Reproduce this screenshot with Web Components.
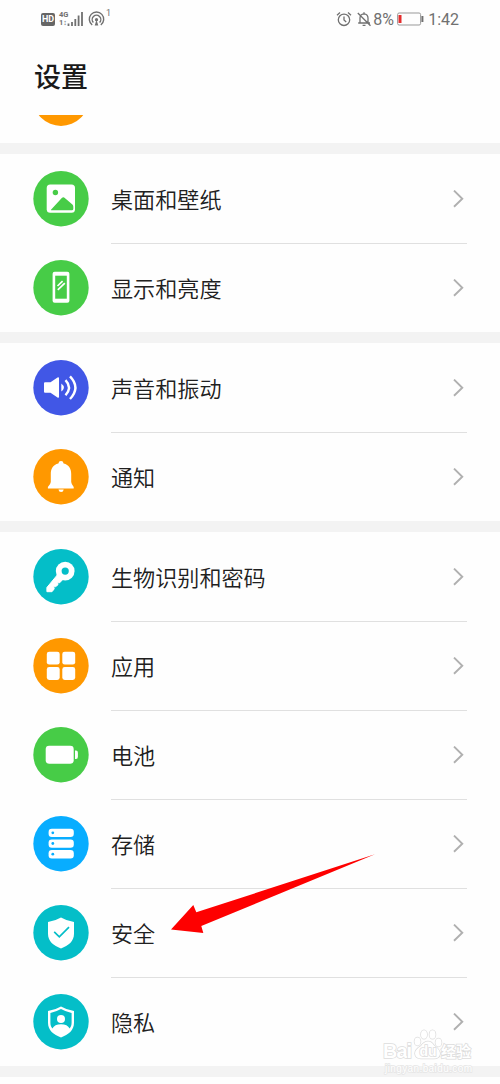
<!DOCTYPE html>
<html lang="zh-CN">
<head>
<meta charset="utf-8">
<title>设置</title>
<style>
  body {
    margin: 0;
    background: #fefefe;
    color: #202020;
    font-family: Roboto, "Noto Sans CJK SC", sans-serif;
  }
</style>
</head>
<body>
<settings-screen>
  <status-bar></status-bar>
  <settings-group>
    <settings-item icon="picture" color="#47cc47">桌面和壁纸</settings-item>
    <settings-item icon="display" color="#47cc47">显示和亮度</settings-item>
  </settings-group>
  <settings-group>
    <settings-item icon="sound" color="#4157e6">声音和振动</settings-item>
    <settings-item icon="bell" color="#ff9800">通知</settings-item>
  </settings-group>
  <settings-group>
    <settings-item icon="key" color="#04bec8">生物识别和密码</settings-item>
    <settings-item icon="apps" color="#ff9800">应用</settings-item>
    <settings-item icon="battery" color="#47cc47">电池</settings-item>
    <settings-item icon="storage" color="#08adff">存储</settings-item>
    <settings-item icon="security" color="#04bec8">安全</settings-item>
    <settings-item icon="privacy" color="#04bec8">隐私</settings-item>
  </settings-group>
</settings-screen>

<script>
const SHIELD = "M28 12.7Q34 16.2 41 17.3V29C41 36.5 35.5 41 28 43.7C20.5 41 15 36.5 15 29V17.3Q22 16.2 28 12.7Z";

// Glyphs on a 56x56 disc; currentColor is the disc colour
const ICONS = {
  picture: `
    <rect x="13.7" y="13.7" width="28.3" height="28.3" rx="3.5"/>
    <g fill="currentColor">
      <circle cx="22.4" cy="21.8" r="2.7"/>
      <path d="M18.3 39.6Q17.5 39.6 18.2 38.8L28.8 27.3Q30.3 25.8 31.8 27.2L39.4 33.8Q40.3 34.7 40.3 36V38.2Q40.3 39.6 38.8 39.6Z"/>
    </g>`,
  display: `
    <rect x="19.6" y="12" width="16.8" height="31" rx="2"/>
    <rect x="22.2" y="16" width="11.6" height="23" fill="currentColor"/>
    <path d="M24.5 26.3L29.6 21.4M24.8 30.2L31.8 23.4" fill="none" stroke="#fff" stroke-width="1.7"/>`,
  sound: `
    <path d="M12 22.5H17.5L24.5 17.7Q26 17 26 18.5V37Q26 38.5 24.5 37.8L17.5 33H12Q11 33 11 32V23.5Q11 22.5 12 22.5Z"/>
    <path d="M28.3 23.8Q33.4 27.8 28.3 31.9Z"/>
    <g fill="none" stroke="#fff" stroke-width="2.4">
      <path d="M32.5 20.4Q39.5 27.8 32.5 35.5"/>
      <path d="M37 16.7Q47.8 27.8 37 39.3"/>
    </g>`,
  bell: `
    <path d="M28 12.3Q30.3 12.3 30.6 14.7C36 16 38.2 20 38.2 25V33.2Q38.4 35.5 40.7 38.2V39.7H14.9V38.2Q17.6 35.5 17.8 33.2V25C17.8 20 20 16 25.4 14.7Q25.7 12.3 28 12.3Z"/>
    <path d="M25.5 40.8H30.7Q30.4 43.3 28.1 43.3Q25.8 43.3 25.5 40.8Z"/>`,
  key: `
    <path d="M27 23L32 28.5L26.5 34.2L24.8 33.2L25 36L22.6 38L20.7 37.3L21.2 40.2L19 43H13.9V38.8Z" stroke="#fff" stroke-linejoin="round"/>
    <circle cx="32.2" cy="22.4" r="9.4"/>
    <circle cx="32.2" cy="22.4" r="3.6" fill="currentColor"/>`,
  apps: `
    <rect x="13.8" y="14" width="12.9" height="12.9" rx="2.4"/>
    <rect x="29.3" y="14" width="12.9" height="12.9" rx="2.4"/>
    <rect x="13.8" y="29.3" width="12.9" height="12.9" rx="2.4"/>
    <rect x="29.3" y="29.3" width="12.9" height="12.9" rx="2.4"/>`,
  battery: `
    <rect x="12.7" y="19" width="28" height="18" rx="3.4"/>
    <path d="M42 23.8H43Q44.9 23.8 44.9 26V30Q44.9 32.2 43 32.2H42Z"/>`,
  storage: [13, 23.7, 34.4].map((y) => `
    <rect x="15.6" y="${y}" width="25.2" height="8.3" rx="3.2"/>
    <circle cx="19.8" cy="${y + 4.1}" r="1.4" fill="currentColor"/>`).join(""),
  security: `
    <path d="${SHIELD}"/>
    <path d="M21.2 27.2L26.3 32.1L36 22.5" fill="none" stroke="currentColor" stroke-width="1.7"/>`,
  privacy: `
    <path d="${SHIELD}"/>
    <path d="M28 15.4Q33 18.3 38.6 19.2V29C38.6 31.5 37.9 33.2 36.6 34.8Q34.5 30.5 28 30.5Q21.5 30.5 19.4 34.8C18.1 33.2 17.4 31.5 17.4 29V19.2Q23 18.3 28 15.4Z" fill="currentColor"/>
    <circle cx="28" cy="25.2" r="4"/>`
};

class StatusBar extends HTMLElement {
  constructor() {
    super();
    this.attachShadow({ mode: "open" });
  }

  static get styles() {
    return /* css */`
      :host {
        display: flex;
        align-items: center;
        justify-content: space-between;
        box-sizing: border-box;
        height: 38px;
        padding: 0 41px 0 41px;
        color: #707070;
      }

      .side {
        display: flex;
        align-items: center;
      }

      svg {
        display: block;
        fill: none;
        stroke: currentColor;
      }

      .hd {
        width: 14px;
        height: 13px;
        border-radius: 2px;
        background: #666;
        color: #fff;
        font: bold 9px/13px Roboto, sans-serif;
        text-align: center;
      }

      .net {
        margin-left: 4px;
        width: 9px;
        font: bold 7.5px/8px Roboto, sans-serif;
      }

      .bars {
        margin-left: -1px;
      }

      .cast {
        margin-left: 5px;
      }

      .one {
        margin: -12px 0 0 1px;
        font-size: 9px;
      }

      .text {
        font-size: 16px;
        line-height: 20px;
        padding-top: 1px;
      }
    `;
  }

  connectedCallback() {
    this.shadowRoot.innerHTML = /* html */`
    <style>${StatusBar.styles}</style>
    <div class="side">
      <div class="hd">HD</div>
      <div class="net">4G<br>1↕</div>
      <svg class="bars" width="16" height="16" stroke-width="1.8">
        <path d="M1.5 15V12.5M5 15V11M8.3 15V8M11.6 15V4.5M15 15V1"/>
      </svg>
      <svg class="cast" width="17" height="16" stroke-width="1.4">
        <path d="M4.2 14A7.2 7.2 0 1 1 12.8 14M5.4 11.5A4.3 4.3 0 1 1 11.6 11.5"/>
        <circle cx="8.5" cy="8.7" r="1.6" fill="currentColor" stroke="none"/>
        <path d="M8.5 9L6.7 14.5H10.3Z" fill="currentColor" stroke="none"/>
      </svg>
      <span class="one">1</span>
    </div>
    <div class="side">
      <svg width="16" height="16" stroke-width="1.3">
        <circle cx="8" cy="8.8" r="5.7"/>
        <path d="M8 5.5V9L10.2 11M1 4.3L4 1.6M15 4.3L12 1.6"/>
      </svg>
      <svg width="16" height="16" stroke-width="1.3" style="margin-left: 4px">
        <path d="M4 12V7Q4 3.2 8 2.8Q12 3.2 12 7V12M2.2 12H14M6.6 14.3H9.5M8 1.2V3M1.8 2L14.5 14.8"/>
      </svg>
      <span class="text" style="margin-left: 1px; width: 24px">8%</span>
      <svg width="27" height="14">
        <rect x=".6" y="1" width="23" height="12" rx="1.5" stroke="#999"/>
        <path d="M3 3V11" stroke="#e52d2d" stroke-width="3"/>
        <path d="M25.4 4V10" stroke-width="2"/>
      </svg>
      <span class="text" style="margin-left: 4px">1:42</span>
    </div>`;
  }
}

class SettingsScreen extends HTMLElement {
  constructor() {
    super();
    this.attachShadow({ mode: "open" });
  }

  static get styles() {
    return /* css */`
      :host {
        display: flex;
        flex-direction: column;
        position: relative;
        width: 500px;
        height: 1084px;
        overflow: hidden;
      }

      h1 {
        box-sizing: border-box;
        margin: 0;
        height: 77px;
        padding: 3px 0 0 34px;
        color: #1a1a1a;
        font-size: 27px;
        font-weight: 500;
        line-height: 75px;
      }

      .clipped {
        height: 28px;
        padding-left: 33px;
        overflow: hidden;
      }

      .disc {
        width: 56px;
        height: 56px;
        margin-top: -44.7px;
        border-radius: 50%;
        background: #ff9800;
      }

      .end {
        height: 11px;
        background: #f3f3f3;
      }

      .pointer {
        position: absolute;
        left: 165px;
        top: 850px;
      }

      .watermark {
        position: absolute;
        left: 382px;
        top: 1026px;
        font-family: "Liberation Sans", "Noto Sans CJK SC", sans-serif;
      }
    `;
  }

  connectedCallback() {
    this.shadowRoot.innerHTML = /* html */`
    <style>${SettingsScreen.styles}</style>
    <slot name="status"></slot>
    <h1>设置</h1>
    <div class="clipped"><div class="disc"></div></div>
    <slot></slot>
    <div class="end"></div>
    <svg class="pointer" width="215" height="90">
      <path d="M6 79.5L28.3 55L31.3 62.3L210 4.3L36.3 76L38.3 83Z" fill="#fe0000"/>
    </svg>
    <svg class="watermark" width="100" height="52" fill="#fff" stroke="#dcdcdc" stroke-width="1.5" paint-order="stroke">
      <text x="1" y="31.5" font-size="20" font-weight="bold" textLength="29">Bai</text>
      <ellipse cx="35.5" cy="15.5" rx="3" ry="4"/>
      <ellipse cx="42" cy="8.5" rx="3" ry="4.3"/>
      <ellipse cx="50.5" cy="8.5" rx="3" ry="4.3"/>
      <ellipse cx="56.5" cy="16.5" rx="3" ry="4"/>
      <path d="M46 15.5Q49.5 15.5 52 19.5Q58 23.5 58 28Q57 33 51 32.5H40Q33.5 33 33 27.5Q33 23.5 39 20Q42 15.5 46 15.5Z"/>
      <text x="37.5" y="30" font-size="14" font-weight="bold">du</text>
      <text x="59" y="30.5" font-size="15" font-weight="bold">经验</text>
      <text x="3" y="46" font-size="10" textLength="87" stroke="#e6e6e6">jingyan.baidu.com</text>
    </svg>`;
    this.querySelector("status-bar").slot = "status";
  }
}

class SettingsGroup extends HTMLElement {
  constructor() {
    super();
    this.attachShadow({ mode: "open" });
    this.shadowRoot.innerHTML = /* html */`
    <style>
      :host {
        display: flex;
        flex-direction: column;
        border-top: 11px solid #f3f3f3;
      }

      ::slotted(:not(:first-child)) {
        --divider: #e0e0e0;
      }
    </style>
    <slot></slot>`;
  }
}

class SettingsItem extends HTMLElement {
  constructor() {
    super();
    this.attachShadow({ mode: "open" });
  }

  static get styles() {
    return /* css */`
      :host {
        display: flex;
        align-items: center;
        gap: 22px;
        height: 89px;
        padding: 0 33px;
      }

      .icon {
        display: block;
        flex: none;
        fill: #fff;
      }

      .row {
        flex: 1;
        display: flex;
        align-items: center;
        justify-content: space-between;
        box-sizing: border-box;
        height: 89px;
        padding-right: 3px;
        border-top: 1px solid var(--divider, transparent);
        font-size: 22.1px;
        font-weight: 350;
        line-height: 32px;
      }

      .label {
        padding-top: 1px;
      }

      .chevron {
        fill: none;
        stroke: #b0b0b0;
        stroke-width: 1.9;
      }
    `;
  }

  connectedCallback() {
    const color = this.getAttribute("color");
    this.shadowRoot.innerHTML = /* html */`
    <style>${SettingsItem.styles}</style>
    <svg class="icon" width="56" height="56" viewBox="0 .3 56 56" style="color: ${color}">
      <circle cx="28" cy="28" r="27.7" fill="currentColor"/>
      ${ICONS[this.getAttribute("icon")]}
    </svg>
    <div class="row">
      <span class="label"><slot></slot></span>
      <svg class="chevron" width="11" height="18"><path d="M1 .6L9.3 8.7L1 16.8"/></svg>
    </div>`;
  }
}

customElements.define("status-bar", StatusBar);
customElements.define("settings-screen", SettingsScreen);
customElements.define("settings-group", SettingsGroup);
customElements.define("settings-item", SettingsItem);
</script>
</body>
</html>
